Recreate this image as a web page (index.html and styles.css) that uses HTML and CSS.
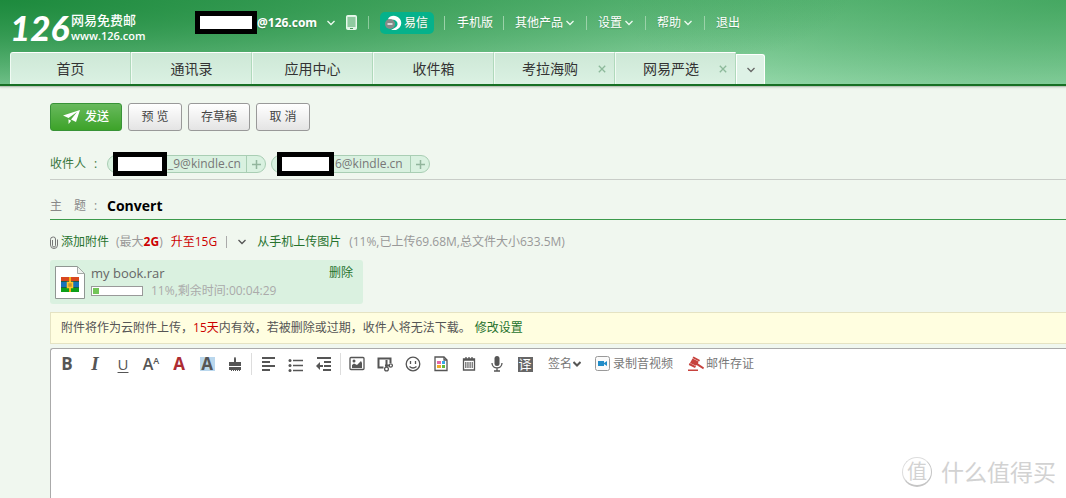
FILE: index.html
```html
<!DOCTYPE html>
<html lang="zh-CN">
<head>
<meta charset="utf-8">
<title>126网易免费邮</title>
<link rel="stylesheet" href="styles.css">
</head>
<body>
<header class="header">
  <div class="topbar">
    <a class="logo" href="#">
      <span class="logo-number">126</span>
      <span class="logo-text"><span class="logo-name">网易免费邮</span><span class="logo-url">www.126.com</span></span>
    </a>
    <div class="account">
      <span class="mask mask-account"></span><strong>@126.com</strong>
      <svg class="chev" viewBox="0 0 8 6"><path d="M0.5 1l3.5 3.5L7.5 1"/></svg>
      <svg class="phone" viewBox="0 0 11 15"><rect x=".5" y=".5" width="10" height="14" rx="1" fill="#dff3e5" stroke="#e8f8ec"/><rect x="1.5" y="2" width="8" height="10" fill="#8fcaa0"/><path d="M4 13.5h3" stroke="#459a5b"/></svg>
    </div>
    <nav class="links">
      <span class="divider"></span>
      <a class="yixin" href="#"><svg viewBox="0 0 18 16"><path d="M3 4C5 0 11-.5 14.5 3.5S16 13.5 11 15H6l4-2.2c4-2 3-7-1-8C7 4.300 5.500 5 5 6z" fill="#fff"/><circle cx="5" cy="9" r="5" fill="#858b88"/><path d="M2.500 9h5" stroke="#fff" stroke-width="1.400"/></svg>易信</a>
      <a class="w-mobile" href="#">手机版</a>
      <a class="w-products" href="#">其他产品<svg class="chev" viewBox="0 0 8 6"><path d="M0.5 1l3.5 3.5L7.5 1"/></svg></a>
      <a class="w-menu" href="#">设置<svg class="chev" viewBox="0 0 8 6"><path d="M0.5 1l3.5 3.5L7.5 1"/></svg></a>
      <a class="w-menu" href="#">帮助<svg class="chev" viewBox="0 0 8 6"><path d="M0.5 1l3.5 3.5L7.5 1"/></svg></a>
      <a class="w-exit" href="#">退出</a>
    </nav>
  </div>
  <nav class="tabs">
    <a class="tab" href="#">首页</a>
    <a class="tab" href="#">通讯录</a>
    <a class="tab" href="#">应用中心</a>
    <a class="tab" href="#">收件箱</a>
    <div class="tab closable"><a href="#">考拉海购</a><button class="close" aria-label="关闭考拉海购"><svg viewBox="0 0 8 8"><path d="M.8.8l6.400 6.400M7.200.8L.8 7.200"/></svg></button></div>
    <div class="tab closable"><a href="#">网易严选</a><button class="close" aria-label="关闭网易严选"><svg viewBox="0 0 8 8"><path d="M.8.8l6.400 6.400M7.200.8L.8 7.200"/></svg></button></div>
    <button class="more" aria-label="更多标签"><svg class="chev" viewBox="0 0 8 6"><path d="M0.5 1l3.5 3.5L7.5 1"/></svg></button>
  </nav>
</header>

<main class="compose">
  <div class="actions">
    <button class="btn send"><svg viewBox="0 0 17 14"><path d="M0 5.500L17 0l-4 12-5-2.500L14 2 5.500 8z"/><path d="M5.500 9.300l2.700 1.500L5.600 14z"/></svg>发送</button>
    <button class="btn">预 览</button>
    <button class="btn draft">存草稿</button>
    <button class="btn">取 消</button>
  </div>

  <div class="field">
    <span class="label to">收件人<i>:</i></span>
    <div class="chips">
      <span class="chip"><span class="mask mask-one"></span><span class="address">_9@kindle.cn</span><button aria-label="添加联系人"><svg viewBox="0 0 9 9"><path d="M4.500 0v9M0 4.500h9"/></svg></button></span>
      <span class="chip"><span class="mask mask-two"></span><span class="address">6@kindle.cn</span><button aria-label="添加联系人"><svg viewBox="0 0 9 9"><path d="M4.500 0v9M0 4.500h9"/></svg></button></span>
    </div>
  </div>
  <div class="field subject">
    <label class="label" for="subject"><span>主</span><span>题</span><i>:</i></label>
    <input id="subject" type="text" value="Convert">
  </div>

  <div class="attach">
    <svg class="clip" viewBox="0 0 8 13"><path d="M2.500 4v5.500a1.500 1.500 0 003 0V3a2 2 0 00-2-2h-.5a2.500 2.500 0 00-2.500 2.500V9a3.500 3.500 0 007 0V3.500"/></svg>
    <a class="green" href="#">添加附件</a>
    <span class="limit">(最大<b>2G</b>)</span>
    <a class="red" href="#">升至15G</a>
    <span class="bar"></span>
    <svg class="chev dark" viewBox="0 0 8 6"><path d="M0.5 1l3.5 3.5L7.5 1"/></svg>
    <a class="green phone-upload" href="#">从手机上传图片</a>
    <span>(11%,已上传69.68M,总文件大小633.5M)</span>
  </div>

  <div class="file">
    <svg class="file-icon" viewBox="0 0 30 33"><path d="M.5.500h22l7 7v25H.5z" fill="#fff" stroke="#8f9692"/><path d="M22.500.500v7h7z" fill="#edf1ee" stroke="#a5aba7"/>
      <rect x="6" y="11" width="18" height="5" fill="#d9471f"/><rect x="6" y="16" width="18" height="6" fill="#1672b8"/><rect x="6" y="22" width="18" height="4" fill="#0c9f18"/><path d="M6 15.500h18M6 21.500h18" stroke="#1a5c49"/><path d="M14 11h2v15h-2z" fill="#f5b51b"/><rect x="12.500" y="16.500" width="5" height="5" fill="#cd932a" stroke="#ffc72d" stroke-width="1.500"/></svg>
    <div class="file-info">
      <div class="file-name"><span>my book.rar</span><a class="green" href="#">删除</a></div>
      <div class="file-state"><span class="progress"><span style="width:13%"></span></span><span>11%,剩余时间:00:04:29</span></div>
    </div>
  </div>

  <p class="notice">附件将作为云附件上传，<em>15天</em>内有效，若被删除或过期，收件人将无法下载。<a class="green" href="#">修改设置</a></p>

  <section class="editor">
    <div class="tools">
      <button class="tool bold">B</button>
      <button class="tool italic">I</button>
      <button class="tool underline">U</button>
      <button class="tool size">A<small>A</small></button>
      <button class="tool color">A</button>
      <button class="tool highlight"><span>A</span></button>
      <button class="tool" aria-label="格式刷"><svg viewBox="0 0 16 16"><path d="M7 6V3.500C7 2 7.300 1 8 1s1 1 1 2.500V6h5v4H2V6zM2 11h12v3h-1v1h-1v-1h-1v1h-1v-1H9v1H8v-1H7v1H6v-1H5v1H4v-1H2z" fill="#555"/></svg></button>
      <span class="sep"></span>
      <button class="tool" aria-label="对齐"><svg viewBox="0 0 16 16"><path d="M2 2h13M2 6h8M2 10h13M2 14h8" class="thick"/></svg></button>
      <button class="tool" aria-label="列表"><svg viewBox="0 0 16 16"><path d="M5 4.500h10M5 9.500h10M5 14.500h10" class="line"/><g fill="#555"><circle cx="2" cy="4.500" r="1.500"/><circle cx="2" cy="9.500" r="1.500"/><circle cx="2" cy="14.500" r="1.500"/></g></svg></button>
      <button class="tool" aria-label="缩进"><svg viewBox="0 0 16 16"><path d="M1 2h14M8 6h7M8 10h7M7 14h8" class="thick"/><path d="M0 10l4-4v3h3v2H4v3z" fill="#555"/></svg></button>
      <span class="sep"></span>
      <button class="tool" aria-label="图片"><svg viewBox="0 0 16 16"><rect x="1" y="1.500" width="14" height="12" rx="1" class="line"/><circle cx="5" cy="5" r="1.500" fill="#555"/><path d="M3 12V9l2-1.500L8 9l4-4 1 2v5z" fill="#555"/></svg></button>
      <button class="tool" aria-label="截图"><svg viewBox="0 0 16 16"><path d="M6.500 11.500H1.500v-9h12V7" class="thick"/><path d="M9.500 4v7M8 9.500h5" class="thick"/><circle cx="9.500" cy="13" r="1.900" class="line"/><circle cx="13.800" cy="9.500" r="1.600" class="line"/></svg></button>
      <button class="tool" aria-label="表情"><svg viewBox="0 0 16 16"><circle cx="8" cy="8" r="6.800" class="line"/><path d="M5.500 5v3M10.500 5v3M4.500 10.500q3.500 3 7 0" class="line"/></svg></button>
      <button class="tool" aria-label="信纸"><svg viewBox="0 0 16 16"><path d="M2 1h9l3 3v10.500H2z" class="line"/><path d="M11 1v3h3" class="line"/><path fill="#e467a7" d="M4 5h4v3H4z"/><path fill="#35a8e8" d="M9 5h3v3H9z"/><path fill="#efaa28" d="M4 9h4v3H4z"/><path fill="#62b93c" d="M9 9h3v3H9z"/></svg></button>
      <button class="tool" aria-label="日期"><svg viewBox="0 0 16 16"><path d="M2.500 3h11v11h-11zM2 4h12M5 1v3M8 1v3M11 1v3" class="line"/><path d="M4 7h8M4 9h8M4 11h8" stroke="#555" stroke-width="1.300" stroke-dasharray="1.500 .7"/></svg></button>
      <button class="tool" aria-label="语音"><svg viewBox="0 0 16 16"><rect x="5.500" y="0" width="5" height="10" rx="2.500" fill="#555"/><path d="M3 7c0 6.500 10 6.500 10 0M8 12v3M5 15h6" class="line"/></svg></button>
      <button class="tool translate"><span>译</span></button>
      <button class="text-tool signature">签名<svg class="chev dark" viewBox="0 0 8 6"><path d="M0.5 1l3.5 3.5L7.5 1"/></svg></button>
      <button class="text-tool video"><svg viewBox="0 0 16 16"><rect x=".5" y=".5" width="14" height="14" rx="2" fill="#fafafa" stroke="#999"/><path d="M3 5h6v5H3zM9 7l3-2v5L9 8z" fill="#218cc8"/></svg>录制音视频</button>
      <button class="text-tool proof"><svg viewBox="0 0 16 16"><path d="M5.500.5L12 4l-.8 1.500L4.500 2zM4.500 2.500l6 3-.5 2 6 4-.8 1.800L8.500 9 8 9.800 2 7zM1.500 7L8 10.200 7 12 .8 9zM0 13.500h10V15H0z" fill="#c7423d"/></svg>邮件存证</button>
    </div>
    <div class="paper" contenteditable="true" role="textbox" aria-label="正文"></div>
  </section>
</main>

<div class="watermark"><span class="stamp">值</span><span>什么值得买</span></div>
</body>
</html>
```

FILE: styles.css
```css
* { box-sizing: border-box; }
body {
  margin: 0;
  min-height: 100vh;
  display: flex;
  flex-direction: column;
  position: relative;
  overflow: hidden;
  background: #f0f7ef;
  color: #555;
  font: 12px/18px "Open Sans", "Noto Sans CJK SC", sans-serif;
}
a { color: inherit; text-decoration: none; }
button { margin: 0; padding: 0; border: 0; background: none; color: inherit; font: inherit; }
svg { display: block; flex: none; }
.green { color: #26722d; }
.chev { width: 8px; height: 6px; fill: none; stroke: #eefbf1; stroke-width: 1.3; }
.chev.dark { stroke: #555; }
.mask { flex: none; border: 5px solid #000; background: #fff; }

.header {
  border-bottom: 2px solid #176f24;
  box-shadow: 0 1px 1px #b9c4b8, 0 2px 2px #dbe3da;
  background:
    radial-gradient(ellipse 850px 125px at 0 0, #1d8a3d 0%, rgba(29, 138, 61, .75) 28%, transparent 100%),
    radial-gradient(ellipse 450px 140px at 100% 0, rgba(50, 155, 80, .6), transparent),
    linear-gradient(#63bb7d, #98daad);
}
.topbar { display: flex; height: 52px; padding-left: 10px; color: #fff; }
.logo { display: flex; width: 185px; gap: 5px; padding-top: 12px; }
.logo-number { width: 56px; font: italic 900 35px/30px Lato, sans-serif; }
.logo-text { display: flex; flex-direction: column; font-weight: 500; }
.logo-name { font-size: 13px; line-height: 17px; }
.logo-url { font-size: 11px; line-height: 14px; font-weight: 600; }
.account { display: flex; align-items: center; width: 173px; height: 45px; font-size: 12px; }
.account strong { width: 70px; text-shadow: 0 1px 1px #397d49; }
.account .phone { width: 11px; height: 15px; margin-left: 11px; }
.mask-account { width: 62px; height: 23px; }
.links { display: flex; align-items: center; height: 45px; text-shadow: 0 1px 1px #4e9a61; }
.links a { display: flex; align-items: center; gap: 3px; height: 14px; padding-left: 12px; border-left: 1px solid #9bd2a9; }
.divider { width: 1px; height: 13px; background: #8ccb9d; }
.links .yixin { gap: 0; height: 22px; width: 54px; padding-left: 5px; margin: 0 10px 0 11px; border: 0; border-radius: 5px; background: #05b28b; }
.yixin svg { width: 18px; height: 16px; margin-right: 1px; }
.links .w-mobile { width: 59px; }
.links .w-products { width: 83px; padding-left: 11px; }
.links .w-menu { width: 59px; padding-left: 11px; }
.links .w-exit { padding-left: 11px; }

.tabs { display: flex; align-items: flex-end; padding-left: 10px; color: #333; font-size: 14px; }
.tab {
  display: flex;
  align-items: center;
  justify-content: center;
  width: 121px;
  height: 32px;
  border-top: 1px solid #fff;
  border-left: 1px solid #f0faf3;
  border-right: 1px solid #afd9bb;
  background: linear-gradient(#cde8d6, #dbf1e3);
}
.tab:first-child { border-radius: 3px 0 0 0; }
.closable { padding-right: 8px; justify-content: flex-end; gap: 20px; }
.close svg { width: 8px; height: 8px; fill: none; stroke: #8cb99a; stroke-width: 1.3; }
.more { display: grid; place-items: center; width: 29px; height: 30px; border: 1px solid #fff; border-bottom: 0; border-radius: 0 3px 0 0; background: #def2e6; }
.more .chev { stroke: #666; }

.compose { flex: 1; display: flex; flex-direction: column; padding: 17px 0 0 50px; }
.actions { display: flex; gap: 6px; }
.btn { width: 54px; height: 28px; border: 1px solid #999; border-radius: 3px; background: linear-gradient(#fff, #e4e4e4); color: #444; }
.draft { width: 62px; }
.send { display: flex; align-items: center; justify-content: center; gap: 5px; width: 72px; border-color: #389337; background: linear-gradient(#68b95d, #3da329); color: #fff; font-weight: 500; }
.send svg { width: 17px; height: 14px; fill: #fff; }

.field { display: flex; align-items: center; height: 31px; margin-top: 18px; border-bottom: 1px solid #c9cdc8; }
.label { display: flex; width: 57px; color: #888; }
.label i { margin-left: 8px; font-style: normal; }
.to { color: #37753d; }
.chips { display: flex; gap: 5px; }
.chip { display: flex; align-items: center; width: 159px; height: 18px; border: 1px solid #a9ceb4; border-radius: 9px; background: #d9f1e0; color: #777; }
.chip .mask { height: 24px; margin-left: 5px; }
.mask-one { width: 54px; }
.mask-two { width: 57px; }
.address { flex: 1; padding-left: 1px; }
.chip button { display: grid; place-items: center; width: 19px; height: 16px; border-left: 1px solid #a9ceb4; }
.chip svg { width: 9px; height: 9px; stroke: #91b59c; stroke-width: 1.5; }
.subject { height: 28px; margin-top: 12px; border-color: #3c9a4b; }
.subject .label span + span { margin-left: 12px; }
.subject input { flex: 1; min-width: 0; padding: 0; border: 0; outline: 0; background: none; color: #000; font: 700 14px/20px "Open Sans", "Noto Sans CJK SC", sans-serif; }

.attach { display: flex; align-items: center; height: 20px; margin-top: 12px; color: #999; }
.clip { width: 8px; height: 13px; margin-right: 3px; fill: none; stroke: #777; }
.limit { margin: 0 8px 0 7px; }
.limit b, .red, .notice em { color: #c00; font-style: normal; }
.bar { height: 12px; margin: 0 11px 0 9px; border-left: 1px solid #aaa; }
.phone-upload { margin: 0 8px 0 11px; }

.file { display: flex; align-items: center; gap: 6px; width: 313px; height: 44px; margin-top: 8px; padding: 0 10px 0 5px; border-radius: 3px; background: #daf1e0; }
.file-icon { width: 30px; height: 33px; }
.file-info { flex: 1; }
.file-name { display: flex; justify-content: space-between; color: #666; }
.file-name span { font-size: 13px; }
.file-state { display: flex; align-items: center; gap: 8px; color: #aaa; }
.progress { width: 52px; height: 10px; padding: 1px; border: 1px solid #999; background: #fff; }
.progress span { display: block; height: 6px; background: #72c558; }

.notice { margin: 8px 0 0; padding: 6px 10px; border: 1px solid #e5e3c3; border-right: 0; background: #fffee0; }
.notice a { margin-left: 4px; }

.editor { flex: 1; display: flex; flex-direction: column; margin-top: 4px; border: 1px solid #aaa; border-width: 1px 0 0 1px; border-radius: 3px 0 0 0; background: #fff; }
.tools { display: flex; align-items: center; height: 30px; padding-left: 2px; }
.tool { display: flex; align-items: center; justify-content: center; width: 28px; height: 24px; font-size: 17px; font-weight: 700; }
.tool svg { width: 16px; height: 16px; }
.line, .thick { fill: none; stroke: #555; stroke-width: 1.3; }
.thick { stroke-width: 2; }
.italic { font-family: "Liberation Serif", serif; font-style: italic; font-size: 19px; }
.underline { font-size: 15px; font-weight: 400; text-decoration: underline; text-underline-offset: 2px; }
.size { align-items: flex-start; font-size: 16px; line-height: 24px; font-weight: 600; }
.size small { font-size: 9px; line-height: 18px; }
.color { color: #ad2c32; }
.highlight span { width: 15px; line-height: 14px; background: #bad7ed; }
.translate span { width: 15px; line-height: 15px; background: #666; color: #fff; font-size: 13px; font-weight: 400; }
.sep { width: 1px; height: 22px; margin: 0 2px; background: #ddd; }
.text-tool { display: flex; align-items: center; color: #777; }
.signature { margin-left: 9px; gap: 1px; }
.signature .chev { stroke-width: 2; }
.video { margin-left: 14px; gap: 2px; }
.proof { margin-left: 15px; gap: 2px; }
.text-tool svg:not(.chev) { width: 16px; height: 16px; }
.paper { flex: 1; outline: 0; }

.watermark { position: absolute; right: 10px; bottom: 10px; display: flex; align-items: center; gap: 9px; color: #d2d2d2; font-size: 23px; line-height: 32px; }
.stamp { width: 30px; height: 30px; border: 1px solid #ddd; border-right-color: #c5c5c5; border-bottom: 2px solid #c5c5c5; border-radius: 50%; text-align: center; font-size: 20px; line-height: 27px; }
```
